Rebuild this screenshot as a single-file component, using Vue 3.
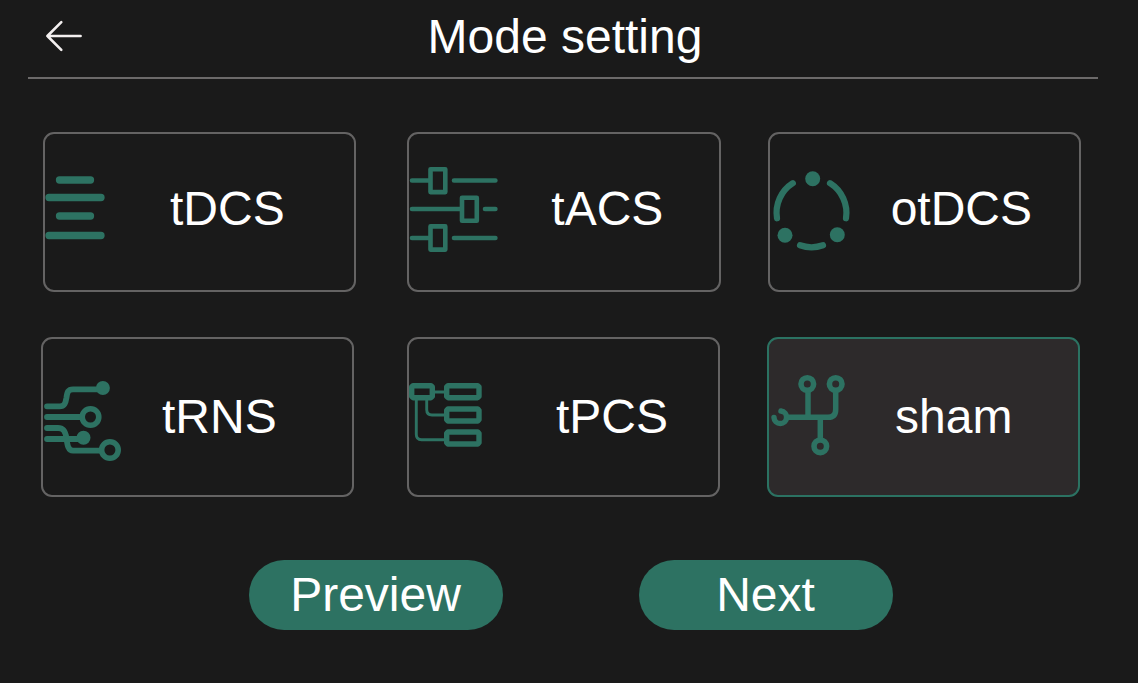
<script setup>
import { ref } from 'vue'

const selected = ref('sham')

const rows = [
  {
    id: 'upper',
    modes: [
      {
        name: 'tDCS',
        width: 125,
        shapes: [{ w: 7.3, d: 'M14.5 46H45.5M4 63.5H56M14.5 82H45.5M4 101.5H56' }]
      },
      {
        name: 'tACS',
        width: 142,
        shapes: [
          {
            w: 4.6,
            d: 'M3 46.5H21M45 46.5H86.4M3 75H53M76 75H86.4M3 104H21M45 104H86.4M21.5 35.2H36.3V58.1H21.5ZM53 63.7H67.8V86.8H53ZM21.5 92.4H36.3V115.6H21.5Z'
          }
        ]
      },
      {
        name: 'otDCS',
        width: 121,
        shapes: [
          {
            w: 6.2,
            d: 'M22.8 49.2A35 35 0 0 0 7 84.3M60 49.2A35 35 0 0 1 76 84.3M30 111.3A35 35 0 0 0 53 111.3'
          }
        ],
        dots: [
          [42.7, 44.7, 7.5],
          [15, 101.3, 7.5],
          [67.3, 100.7, 7.5]
        ]
      }
    ]
  },
  {
    id: 'lower',
    modes: [
      {
        name: 'tRNS',
        width: 119,
        shapes: [
          {
            w: 5.8,
            d: 'M4 67.3H16.5C21.5 67.3 22.6 64 23.4 59C24.2 53 25 50.3 30 50.3H57M4 78H38M4 89H15C20.5 89 22.4 92.5 23.4 99C24.4 106 25 111.7 30 111.7H57M4 100H39'
          }
        ],
        dots: [
          [59.9, 49, 7],
          [40.5, 98.7, 7]
        ],
        rings: [
          [47.5, 78, 8.3],
          [66.9, 111, 8.3]
        ]
      },
      {
        name: 'tPCS',
        width: 147,
        shapes: [
          {
            w: 5.4,
            d: 'M4 46.7H22L23.3 48V57.4L22 58.7H4L2.7 57.4V48ZM39 46.7H68.7L70 48V57.4L68.7 58.7H39L37.7 57.4V48ZM39 70H68.7L70 71.3V80.7L68.7 82H39L37.7 80.7V71.3ZM39 93H68.7L70 94.3V103.7L68.7 105H39L37.7 103.7V94.3Z'
          },
          {
            w: 2.9,
            d: 'M25 53H36M17.7 61V70.5Q17.7 76 23 76H36M7.3 61V95.5Q7.3 100.7 12.5 100.7H36'
          }
        ]
      },
      {
        name: 'sham',
        width: 126,
        shapes: [
          {
            w: 5.5,
            d: 'M19 78.3H59Q66.7 78.3 66.7 70.5V53M39 53V77M51.3 79V99M12 72A6.3 6.3 0 1 1 5 78.6'
          }
        ],
        rings: [
          [38.3, 45, 6.3],
          [66.7, 45, 6.3],
          [51.3, 107.3, 6.3]
        ]
      }
    ]
  }
]
</script>

<template>
  <main class="page">
    <header class="header">
      <button class="back" type="button" aria-label="Back">
        <svg width="40" height="32" viewBox="0 0 40 32" aria-hidden="true">
          <path d="M17.3 2.2L3.4 16L17.3 29.8M3.4 16H36.6" />
        </svg>
      </button>
      <h1 class="title">Mode setting</h1>
    </header>

    <section class="modes" aria-label="Modes">
      <div v-for="row in rows" :key="row.id" class="row" :class="row.id">
        <button
          v-for="mode in row.modes"
          :key="mode.name"
          type="button"
          class="mode"
          :class="{ active: selected === mode.name }"
          :aria-pressed="selected === mode.name"
          @click="selected = mode.name"
        >
          <svg
            class="icon"
            :width="mode.width"
            height="156"
            :viewBox="`0 0 ${mode.width} 156`"
            aria-hidden="true"
          >
            <path v-for="s in mode.shapes" :key="s.d" :d="s.d" :stroke-width="s.w" />
            <circle
              v-for="[x, y, r] in mode.rings"
              :key="`r${x}-${y}`"
              :cx="x"
              :cy="y"
              :r="r"
              stroke-width="5.6"
            />
            <circle
              v-for="[x, y, r] in mode.dots"
              :key="`d${x}-${y}`"
              class="dot"
              :cx="x"
              :cy="y"
              :r="r"
            />
          </svg>
          <span class="label">{{ mode.name }}</span>
        </button>
      </div>
    </section>

    <footer class="actions">
      <button class="action" type="button">Preview</button>
      <button class="action" type="button">Next</button>
    </footer>
  </main>
</template>

<style>
body {
  background: #1a1a1a;
}
</style>

<style scoped>
.page {
  min-height: 100vh;
  box-sizing: border-box;
  background: #1a1a1a;
  color: #fff;
  font-family: "Liberation Sans", Arial, sans-serif;
  font-size: 48px;
  line-height: 56px;
}

button {
  margin: 0;
  padding: 0;
  border: 0;
  background: none;
  color: inherit;
  font: inherit;
  cursor: pointer;
}

.header {
  display: grid;
  grid-template-columns: 72px 1fr 68px;
  align-items: center;
  margin: 0 40px 0 28px;
  padding: 9px 0 12px;
  border-bottom: 2px solid #6c6a6a;
}

.back {
  display: flex;
  padding: 0 0 2px 16px;
}

.back path {
  fill: none;
  stroke: #f3efef;
  stroke-width: 2.6;
  stroke-linecap: round;
  stroke-linejoin: round;
}

.title {
  margin: 0;
  font-size: inherit;
  font-weight: 400;
  text-align: center;
}

.modes {
  display: grid;
  gap: 45px;
  padding-top: 53px;
}

.row {
  display: grid;
}

.upper {
  grid-template-columns: 1fr 51px 1fr 47px 1fr;
  padding: 0 57px 0 43px;
}

.lower {
  grid-template-columns: 1fr 53px 1fr 47px 1fr;
  padding: 0 58px 0 41px;
}

.mode {
  display: flex;
  align-items: center;
  border: 2px solid #646363;
  border-radius: 11px;
  text-align: left;
}

.mode:nth-child(2) {
  grid-column: 3;
}

.mode:nth-child(3) {
  grid-column: 5;
}

.mode.active {
  border-color: #2b7262;
  background: #2d2a2b;
}

.icon {
  flex: none;
  fill: none;
  stroke: #2d7262;
  stroke-linecap: round;
  stroke-linejoin: round;
}

.dot {
  fill: #2d7262;
  stroke: none;
}

.upper .label {
  padding-bottom: 6px;
}

.actions {
  display: flex;
  justify-content: center;
  gap: 136px;
  padding: 63px 0 53px 3px;
}

.action {
  width: 254px;
  height: 70px;
  border-radius: 35px;
  background: #2d7262;
}
</style>
